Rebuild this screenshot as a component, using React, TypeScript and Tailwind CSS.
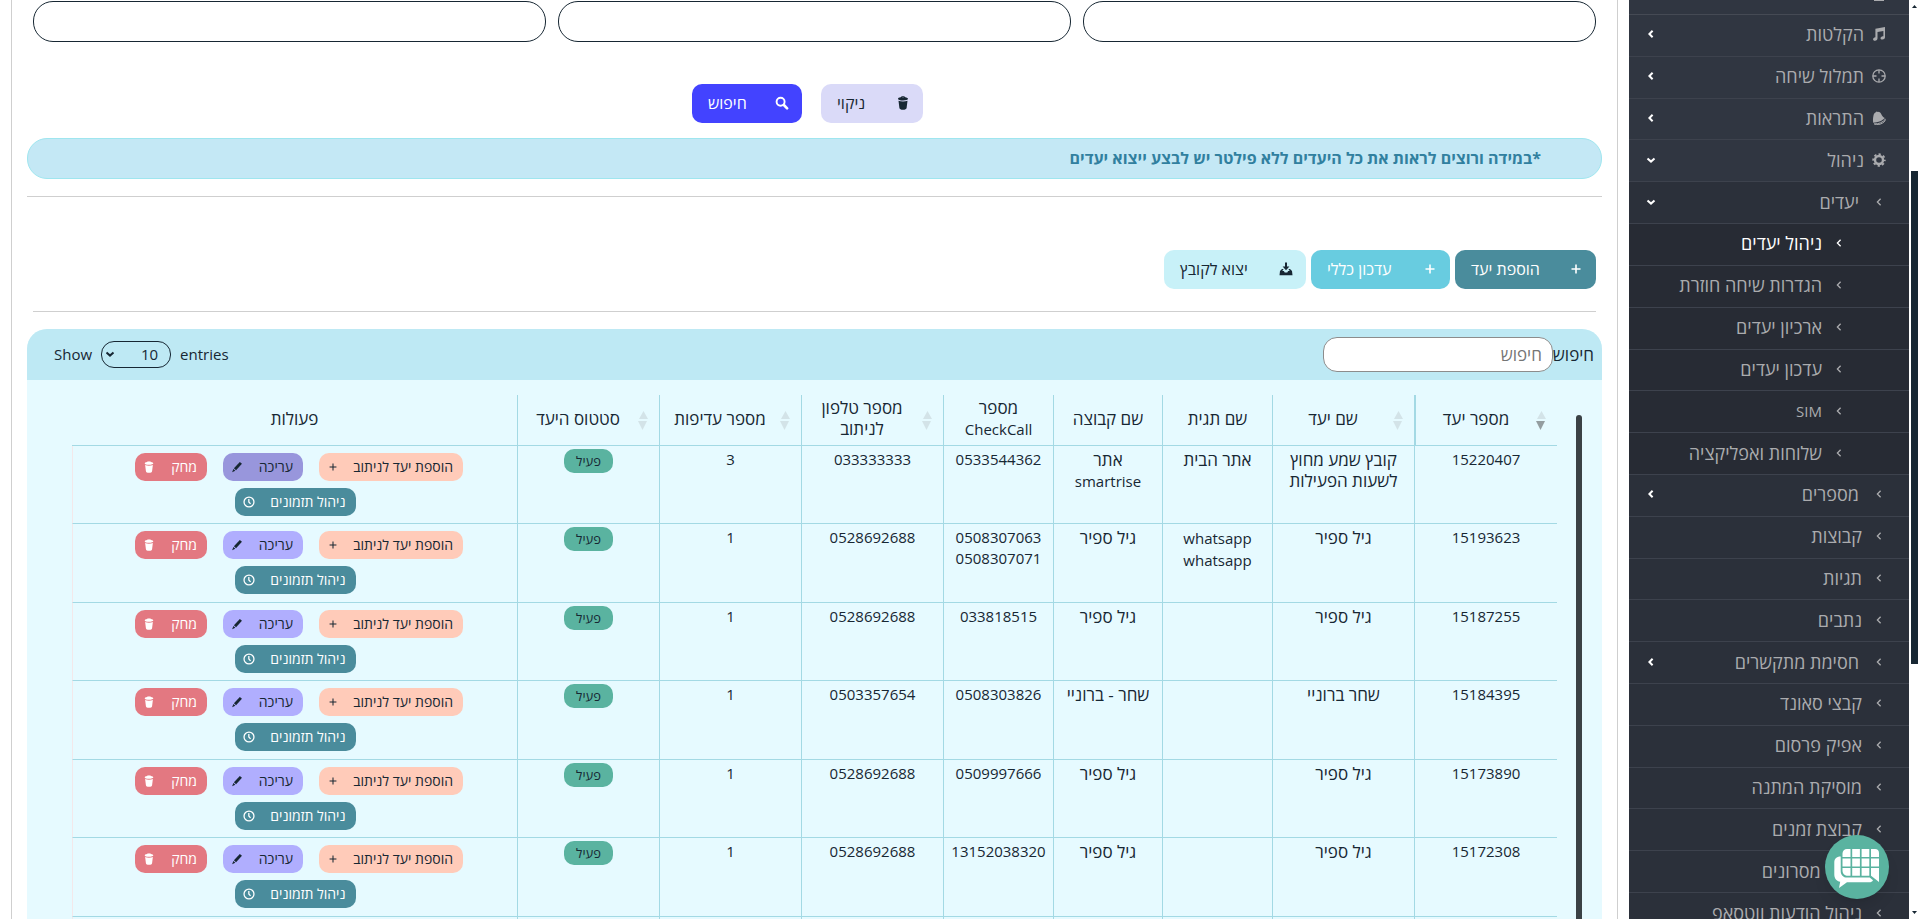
import React, { useState } from "react";

type IconName = "music" | "target" | "bell" | "gear" | "trash" | "search" | "plus" | "plusThin" | "download" | "pencil" | "clock";

interface IconProps {
  name: IconName;
  size?: number;
}

const Icon: React.FC<IconProps> = ({ name, size = 14 }) => (
  <svg width={size} height={size} viewBox="0 0 14 14" fill="currentColor" className="shrink-0" aria-hidden="true">
    {name === "music" && (
      <path d="M3.400 1.800 13 0v10.200c0 1.300-1 2.200-2.500 2.400-1.200.100-2-.500-2-1.400 0-1 1-1.900 2.400-2h.500V4L5.500 5v6.200c0 1.400-1 2.400-2.400 2.600-1.200.100-2-.500-2-1.500 0-1.100 1-2 2.300-2.100Z" />
    )}
    {name === "target" && (
      <g fill="none" stroke="currentColor" strokeWidth="1.300">
        <circle cx="7" cy="7" r="6.200" />
        <path d="M7 1v3.500M7 9.500V13M1 7h3.500M9.500 7H13" />
      </g>
    )}
    {name === "bell" && (
      <>
        <path d="M1.200 11.800C.800 9 1 7 1.400 5 1.700 3 2.300 2 3.500 1.400L4.300.500l1 .400C7 .600 8.400 1.400 9.200 3c.900 1.800 1.500 2.900 3.600 4.100-1.400 2.100-6.900 4.700-11.600 4.700Z" />
        <path d="M13.300 8.300c.200 1.800-2 3.900-5.300 4.900-2.400.700-4.800.500-5.800-.300 4.700.200 8.800-1.700 11.100-4.600Z" fill="none" stroke="currentColor" strokeWidth="1" />
      </>
    )}
    {name === "gear" && (
      <g fill="none" stroke="currentColor">
        <circle cx="7" cy="7" r="4" strokeWidth="2.400" />
        <circle cx="7" cy="7" r="5.800" strokeWidth="1.800" strokeDasharray="2.280 2.280" strokeDashoffset="1.140" />
      </g>
    )}
    {name === "trash" && (
      <>
        <path fillRule="evenodd" d="M7 .200c1.400 0 2 .400 2.300 1.100 1.600.300 2.700.900 2.700 1.600S9.800 4.400 7 4.400s-5-.700-5-1.500.900-1.300 2.700-1.600C5 .600 5.600.200 7 .200ZM7 1c-.600 0-.900.100-1.100.300h2.200C7.900 1.100 7.600 1 7 1Z" />
        <path d="M2.500 4.800c2.400.9 6.600.9 9 0l-.9 7.200c-.2 1.200-1.500 1.800-3.600 1.800S3.600 13.200 3.400 12Z" />
      </>
    )}
    {name === "search" && (
      <g fill="none" stroke="currentColor" strokeLinecap="round">
        <circle cx="5.600" cy="5.800" r="4" strokeWidth="1.900" />
        <path d="m8.900 9 3.200 3.300" strokeWidth="2.600" />
      </g>
    )}
    {name === "plus" && <path d="M6.200 2.500h1.600v3.700h3.700v1.600H7.800v3.700H6.200V7.800H2.500V6.200h3.700Z" />}
    {name === "plusThin" && <path d="M7 3v8M3 7h8" stroke="currentColor" strokeWidth="1.200" />}
    {name === "download" && (
      <path d="M6 .5h2v4h2.400L7 8.200 3.600 4.500H6ZM1 9l2-2h1.600L3.300 9h1.600l.8 1.400h2.600L9.100 9h1.600L9.400 7H11l2 2 .5 4.200H.5Z" />
    )}
    {name === "pencil" && <path d="m10.300 1.200 2.500 2.100-6.900 7.400-2.500-2.100ZM2.800 9.300l2.300 2-3.800 1.800Z" />}
    {name === "clock" && (
      <g fill="none" stroke="currentColor" strokeWidth="1.500">
        <circle cx="7" cy="7" r="5.800" />
        <path d="M6.800 3.400V7l2 2.200" />
      </g>
    )}
  </svg>
);

interface ChevronProps {
  down?: boolean;
  bold?: boolean;
}

const Chevron: React.FC<ChevronProps> = ({ down, bold }) => (
  <svg width="10" height="10" viewBox="0 0 10 10" fill="none" stroke="currentColor" strokeWidth={bold ? 2 : 1.3} className="shrink-0" aria-hidden="true">
    <path d={down ? "M1.500 3.500 5 6.600 8.500 3.500" : "M6.600 1.700 3.400 5l3.200 3.300"} />
  </svg>
);

// latin words sit smaller than the hebrew around them
const Mixed: React.FC<{ text: string }> = ({ text }) => (
  <>
    {text.split(/([A-Za-z]+)/).map((part, i) =>
      i % 2 ? (
        <span key={i} className="text-[15px]">
          {part}
        </span>
      ) : (
        part
      )
    )}
  </>
);

interface MenuItem {
  label: string;
  level: 1 | 2 | 3;
  icon?: IconName;
  state?: "open" | "closed";
  active?: boolean;
}

const menu: MenuItem[] = [
  { label: "הקלטות", level: 1, icon: "music", state: "closed" },
  { label: "תמלול שיחה", level: 1, icon: "target", state: "closed" },
  { label: "התראות", level: 1, icon: "bell", state: "closed" },
  { label: "ניהול", level: 1, icon: "gear", state: "open" },
  { label: "יעדים", level: 2, state: "open" },
  { label: "ניהול יעדים", level: 3, active: true },
  { label: "הגדרות שיחה חוזרת", level: 3 },
  { label: "ארכיון יעדים", level: 3 },
  { label: "עדכון יעדים", level: 3 },
  { label: "SIM", level: 3 },
  { label: "שלוחות ואפליקציה", level: 3 },
  { label: "מספרים", level: 2, state: "closed" },
  { label: "קבוצות", level: 2 },
  { label: "תגיות", level: 2 },
  { label: "נתבים", level: 2 },
  { label: "חסימת מתקשרים", level: 2, state: "closed" },
  { label: "קבצי סאונד", level: 2 },
  { label: "אפיק פרסום", level: 2 },
  { label: "מוסיקת המתנה", level: 2 },
  { label: "קבוצת זמנים", level: 2 },
  { label: "ניהול מסרונים", level: 2 },
];

const levelStyle = {
  1: "bg-[#303641] pr-[23px] gap-2",
  2: "bg-[#2b303a] pr-[25px] gap-3",
  3: "bg-[#272b34] pr-[65px] gap-3",
};

const Sidebar: React.FC = () => (
  <nav className="h-screen w-[280px] shrink-0 overflow-hidden bg-[#303641] text-[18px] leading-6 text-[#aaabae]">
    <ul className="flex h-full flex-col">
      <li className="flex h-[15px] shrink-0 items-start border-b border-[#454a54]">
        <span className="mr-[25px] h-px w-2.5 bg-[#aaabae]" />
      </li>
      {menu.map((item) => (
        <li key={item.label} className="flex min-h-8 flex-1 border-b border-[#3d424d]">
          <a
            href="#"
            className={`flex w-full items-center pb-0.5 pl-[17px] ${levelStyle[item.level]} ${item.active ? "text-white" : ""}`}
          >
            {item.icon ? <Icon name={item.icon} /> : <Chevron />}
            <span className={`flex-1 ${item.level === 2 && item.state ? "pr-[3px]" : ""}`}>
              <Mixed text={item.label} />
            </span>
            {item.state && (
              <span className="text-white">
                <Chevron bold down={item.state === "open"} />
              </span>
            )}
          </a>
        </li>
      ))}
      <li className="h-[26px] shrink-0 overflow-hidden">
        <a href="#" className="flex h-10 items-center gap-3 bg-[#2b303a] pl-[17px] pr-[25px]">
          <Chevron />
          <span>ניהול הודעות ווטסאפ</span>
        </a>
      </li>
    </ul>
  </nav>
);

const PageScrollbar: React.FC = () => (
  <div className="flex h-screen w-[11px] shrink-0 flex-col items-center bg-white py-[5px] text-[#172733]">
    <svg width="5" height="3" viewBox="0 0 5 3" fill="currentColor">
      <path d="M0 3h5L2.500 0Z" />
    </svg>
    <div className="grow-[163]" />
    <div className="w-[7px] grow-[493] bg-[#172733]" />
    <div className="grow-[247]" />
    <svg width="5" height="3" viewBox="0 0 5 3" fill="currentColor">
      <path d="M0 0h5L2.500 3Z" />
    </svg>
  </div>
);

interface ActionButtonProps {
  label: string;
  icon: IconName;
  className: string;
}

const ActionButton: React.FC<ActionButtonProps> = ({ label, icon, className }) => (
  <button className={`flex h-[39px] items-center justify-between rounded-[10px] pb-0.5 pl-4 pr-[13px] text-base leading-5 ${className}`}>
    <Icon name={icon} />
    <span>{label}</span>
  </button>
);

const RowButton: React.FC<ActionButtonProps> = ({ label, icon, className }) => (
  <button className={`flex h-7 items-center justify-between rounded-[10px] pl-2 pr-2.5 text-sm leading-5 ${className}`}>
    <span>{label}</span>
    <Icon name={icon} size={12} />
  </button>
);

interface Column {
  label: string;
  width: string;
  sort?: "none" | "desc";
}

const columns: Column[] = [
  { label: "מספר יעד", width: "w-[143px]", sort: "desc" },
  { label: "שם יעד", width: "w-[142px]", sort: "none" },
  { label: "שם תגית", width: "w-[110px]" },
  { label: "שם קבוצה", width: "w-[109px]" },
  { label: "מספר CheckCall", width: "w-[110px]" },
  { label: "מספר טלפון לניתוב", width: "w-[142px]", sort: "none" },
  { label: "מספר עדיפות", width: "w-[142px]", sort: "none" },
  { label: "סטטוס היעד", width: "w-[142px]", sort: "none" },
  { label: "פעולות", width: "w-auto" },
];

interface Target {
  id: string;
  name: string;
  tag: string;
  group: string;
  checkCall: string;
  phone: string;
  priority: number;
}

const targets: Target[] = [
  { id: "15220407", name: "קובץ שמע מחוץ לשעות הפעילות", tag: "אתר הבית", group: "אתר smartrise", checkCall: "0533544362", phone: "033333333", priority: 3 },
  { id: "15193623", name: "גיל ספיר", tag: "whatsapp whatsapp", group: "גיל ספיר", checkCall: "0508307063 0508307071", phone: "0528692688", priority: 1 },
  { id: "15187255", name: "גיל ספיר", tag: "", group: "גיל ספיר", checkCall: "033818515", phone: "0528692688", priority: 1 },
  { id: "15184395", name: "שחר ברוניי", tag: "", group: "שחר - ברוניי", checkCall: "0508303826", phone: "0503357654", priority: 1 },
  { id: "15173890", name: "גיל ספיר", tag: "", group: "גיל ספיר", checkCall: "0509997666", phone: "0528692688", priority: 1 },
  { id: "15172308", name: "גיל ספיר", tag: "", group: "גיל ספיר", checkCall: "13152038320", phone: "0528692688", priority: 1 },
];

const SortIcon: React.FC<{ sort: "none" | "desc" }> = ({ sort }) => (
  <svg width="10" height="19" viewBox="0 0 10 19" className="shrink-0" aria-hidden="true">
    <path d="M1 8h9L5.500 0Z" fill="#d3e3e8" />
    <path d="M0 10h9L4.500 19Z" fill={sort === "desc" ? "#949da0" : "#d3e3e8"} />
  </svg>
);

const cell = "border-b border-l border-[#a3d9e4] px-1.5 pt-[3px] align-top";
const numberCell = `${cell} text-[15px] leading-[21px]`;

const TargetsTable: React.FC = () => (
  <table className="w-full table-fixed border-separate border-spacing-0 text-center text-[17px] leading-[21px]">
    <thead>
      <tr className="h-[51px]">
        {columns.map((col) => (
          <th
            key={col.label}
            className={`border-b border-[#a3d9e4] p-0 font-normal ${col.width} ${col.sort === "desc" ? "border-l-2" : "border-l last:border-l-0"}`}
          >
            {col.sort ? (
              <div className="flex items-center pr-[11px]">
                <SortIcon sort={col.sort} />
                <span className="flex-1 pb-1">{col.label}</span>
              </div>
            ) : (
              <div className="px-2 pb-1">
                <Mixed text={col.label} />
              </div>
            )}
          </th>
        ))}
      </tr>
    </thead>
    <tbody>
      {targets.map((row, i) => (
        <tr key={row.id} className="h-[78px] even:h-[79px]">
          <td className={numberCell}>{row.id}</td>
          <td className={cell}>{row.name}</td>
          <td className={cell}>
            <Mixed text={row.tag} />
          </td>
          <td className={cell}>
            <Mixed text={row.group} />
          </td>
          <td className={numberCell}>{row.checkCall}</td>
          <td className={numberCell}>{row.phone}</td>
          <td className={numberCell}>{row.priority}</td>
          <td className={cell}>
            <span className="inline-block h-6 rounded-[10px] bg-[#5ab3a0] px-3 text-[13px] leading-6">פעיל</span>
          </td>
          <td className="border-b border-l border-b-[#a3d9e4] border-l-[#f3e8ea] p-0 pt-[7px] align-top">
            <div className="flex flex-col items-center gap-[7px]">
              <div className="flex gap-4 pl-2">
                <RowButton label="הוספת יעד לניתוב" icon="plusThin" className="w-36 bg-[#ffcbb9]" />
                <RowButton label="עריכה" icon="pencil" className={`w-20 ${i === 0 ? "bg-[#9896dc]" : "bg-[#b0aefe]"}`} />
                <RowButton label="מחק" icon="trash" className="w-[72px] bg-[#e37881] text-white" />
              </div>
              <RowButton label="ניהול תזמונים" icon="clock" className="w-[121px] bg-[#4a8c9c] text-white" />
            </div>
          </td>
        </tr>
      ))}
      <tr className="h-[78px]">
        {columns.map((col) => (
          <td key={col.label} className="border-l border-[#a3d9e4] last:border-[#f3e8ea]" />
        ))}
      </tr>
    </tbody>
  </table>
);

const ChatWidget: React.FC = () => (
  <button aria-label="chat" className="fixed bottom-5 right-[31px] size-16 rounded-full bg-[#5ab3a0] shadow-lg">
    <svg width="64" height="64" viewBox="0 0 64 64" fill="#fff">
      <path d="M22 14h3.500v8h-8v-3.500C17.500 16 19.500 14 22 14ZM27.200 14h7.700v8h-7.700ZM36.600 14h7.700v8h-7.700ZM46 14h4c2.500 0 4 1.500 4 4v4h-8Z" />
      <path d="M17.500 23.500h8v8h-8ZM27.200 23.500h7.700v8h-7.700ZM36.600 23.500h7.700v8h-7.700ZM46 23.500h8v8h-8Z" />
      <path d="M17.500 33h8v7.700H23c-3 0-5.500-2-5.500-5ZM27.200 33h7.700v7.700h-7.700ZM36.600 33h7.700v7.700h-7.700ZM46 33h8v14l-8-6.300Z" />
      <path d="M15.700 21.500V36c0 4 2.500 6.600 6.500 6.600h22.500l3.300 2.600c-.8 1.400-2 2.100-3.600 2.100H22L14 53l1.200-6.200c-3.500-.8-5.900-3.200-5.900-7.300V27.500c0-3.500 2-6 6.400-6Z" />
    </svg>
  </button>
);

const App: React.FC = () => {
  const [filters, setFilters] = useState<Array<string>>(["", "", ""]);
  const [search, setSearch] = useState("");
  const [entries, setEntries] = useState("10");

  const handleFilterChange = (index: number, value: string) => {
    const next = [...filters];
    next[index] = value;
    setFilters(next);
  };

  return (
    <div dir="rtl" className="flex h-screen overflow-hidden bg-white font-['Open_Sans','Liberation_Sans',sans-serif] text-[#172733]">
      <PageScrollbar />
      <Sidebar />
      <main className="mx-[11px] min-w-0 flex-1 border-x border-[#cfcfcf] px-[15px]">
        <div className="grid grid-cols-3 gap-3 px-1.5 pt-px">
          {filters.map((value, i) => (
            <input
              key={i}
              aria-label={`filter ${i + 1}`}
              value={value}
              onChange={(e) => handleFilterChange(i, e.target.value)}
              className="h-[41px] w-full rounded-[20px] border border-[#172733] px-4"
            />
          ))}
        </div>

        <div className="mt-[42px] flex justify-center gap-[19px] pr-3.5">
          <ActionButton label="ניקוי" icon="trash" className="w-[102px] bg-[#dadaf8]" />
          <ActionButton label="חיפוש" icon="search" className="w-[110px] bg-[#4343ff] text-white" />
        </div>

        <p className="mt-[15px] h-[41px] rounded-[20px] border border-[#9fe6ef] bg-[#c4e8f5] px-[60px] text-base leading-[38px] font-bold text-[#31809f]">
          *במידה ורוצים לראות את כל היעדים ללא פילטר יש לבצע ייצוא יעדים
        </p>
        <hr className="mt-[17px] border-[#cfcfcf]" />

        <div className="mt-[53px] flex gap-[5px] px-1.5">
          <ActionButton label="הוספת יעד" icon="plus" className="w-[141px] bg-[#4a8c9c] text-white" />
          <ActionButton label="עדכון כללי" icon="plus" className="w-[139px] bg-[#68cce0] text-white" />
          <ActionButton label="יצוא לקובץ" icon="download" className="w-[142px] bg-[#c8f1f8]" />
        </div>
        <hr className="mx-1.5 mt-[22px] border-[#cfcfcf]" />

        <section className="mt-[17px] overflow-hidden rounded-t-[20px] bg-[#e6faff]">
          <div className="flex h-[51px] items-center justify-between bg-[#bee9f4] pl-[27px] pr-2">
            <label className="flex items-center text-[17px]">
              חיפוש
              <input
                value={search}
                onChange={(e) => setSearch(e.target.value)}
                placeholder="חיפוש"
                className="h-[35px] w-[230px] rounded-[14px] border border-[#8c8c8c] bg-white px-2.5 placeholder:text-[#757575]"
              />
            </label>
            <label dir="ltr" className="flex items-center gap-[9px] text-[15px]">
              Show
              <span dir="rtl" className="relative">
                <select
                  value={entries}
                  onChange={(e) => setEntries(e.target.value)}
                  className="h-[27px] w-[70px] appearance-none rounded-[13px] border border-[#172733] bg-transparent pr-3"
                >
                  <option>10</option>
                  <option>25</option>
                  <option>50</option>
                  <option>100</option>
                </select>
                <span className="pointer-events-none absolute left-1 top-2">
                  <Chevron bold down />
                </span>
              </span>
              entries
            </label>
          </div>
          <div className="flex pl-[45px] pr-5 pt-[15px]">
            <div className="ml-[19px] mt-5 w-1.5 shrink-0 rounded-full bg-[#3a4145]" />
            <div className="flex-1">
              <TargetsTable />
            </div>
          </div>
        </section>
      </main>
      <ChatWidget />
    </div>
  );
};

export default App;
